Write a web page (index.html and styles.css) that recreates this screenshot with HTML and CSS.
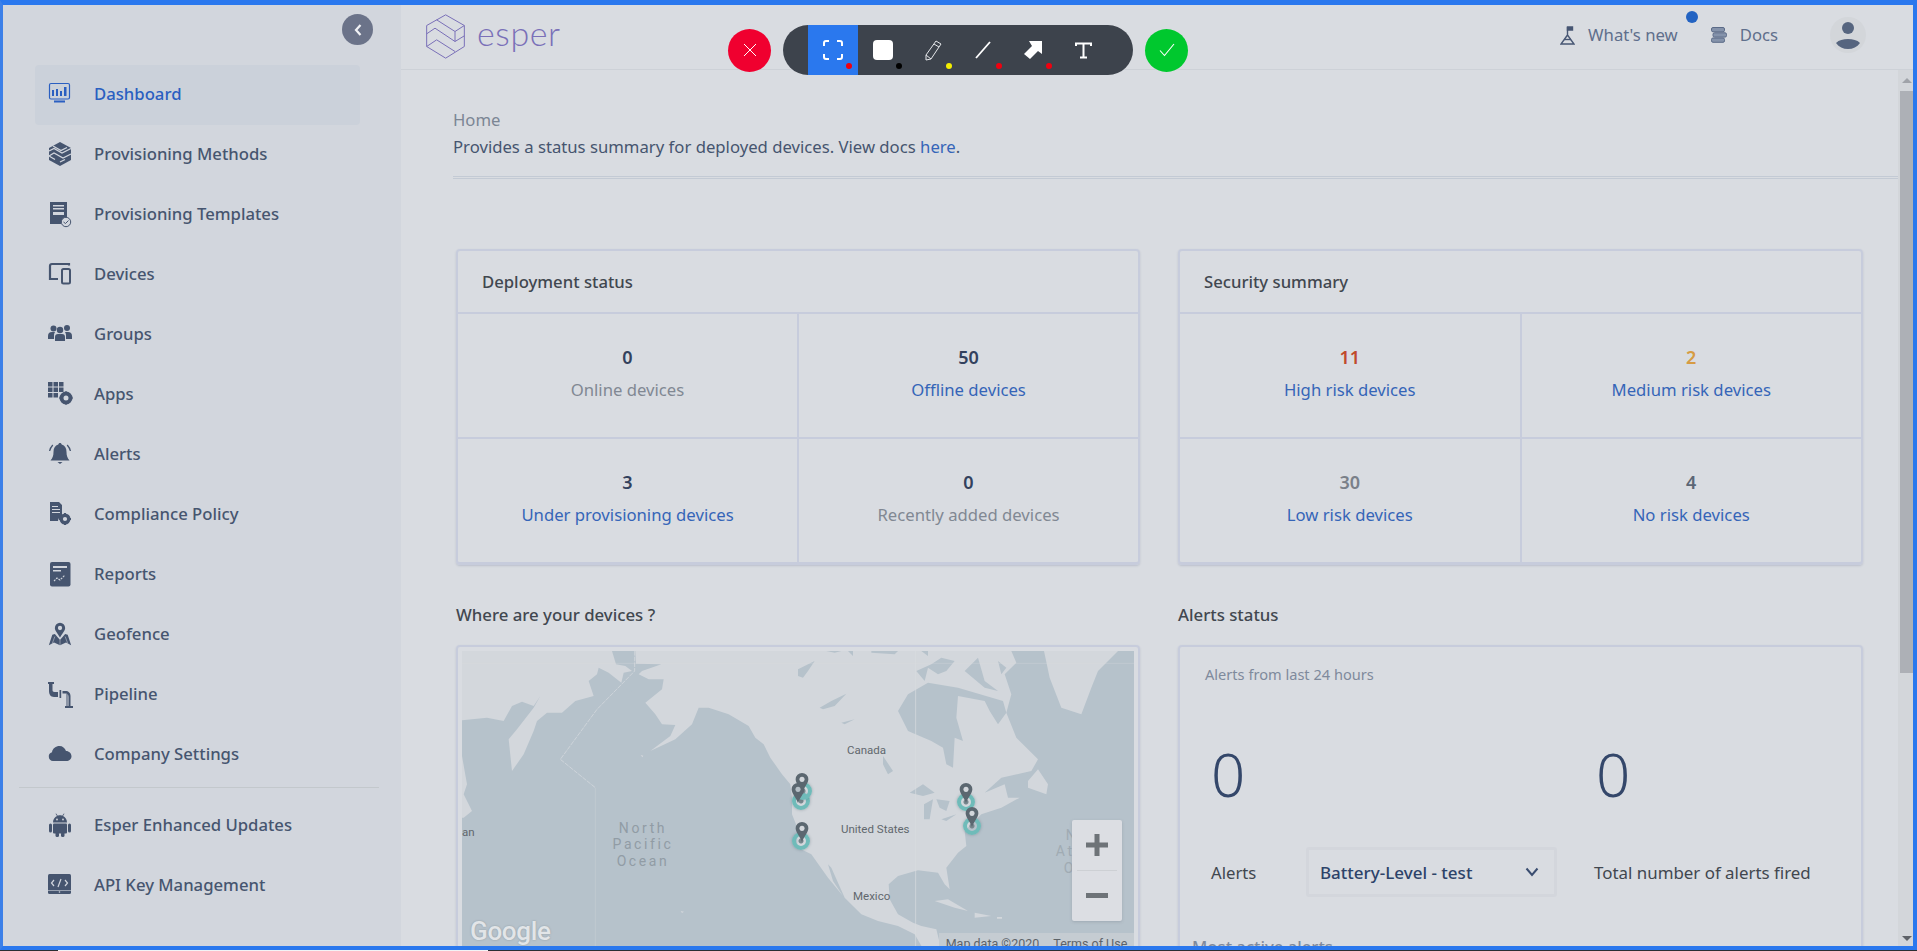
FILE: index.html
```html
<!DOCTYPE html>
<html lang="en">
<head>
    <meta charset="UTF-8">
    <meta name="viewport" content="width=device-width, initial-scale=1.0">
    <title>Esper Dashboard</title>
    <link rel="stylesheet" href="styles.css">
</head>
<body>
    <div class="frame">
        <aside class="sidebar">
            <div class="sidebar-top">
                <button class="collapse-btn">
                    <svg width="10" height="14" viewBox="0 0 10 14"><path d="M7.500 2 L3 7 L7.500 12" fill="none" stroke="#f1f2f5" stroke-width="2.200"/></svg>
                </button>
            </div>
            <ul class="nav-list">
                <li class="nav-item active">
                    <svg class="nav-icon" viewBox="0 0 24 24"><rect x="1.500" y="1.500" width="20" height="15.500" rx="1.500" fill="none" stroke="currentColor" stroke-width="1.200"/><path d="M4 8h2v6H4zM8 7h2v7H8zM12 9h2v5h-2zM16 5h2.500v9H16z" fill="currentColor"/><rect x="6" y="18.500" width="11" height="2" fill="currentColor"/></svg>
                    <span>Dashboard</span>
                </li>
                <li class="nav-item">
                    <svg class="nav-icon" viewBox="0 0 24 24"><path d="M12 0l11 6v12L12 24 1 18V6z" fill="currentColor"/><path d="M5 4l8 4.500 6-3M1 9l5-2.500 8 4.500 9-4.500M1 14l5-3 9 5 8-4M1 14l6 3.500M12 20l5-2.500" fill="none" stroke="#d2d6dd" stroke-width="1.300"/></svg>
                    <span>Provisioning Methods</span>
                </li>
                <li class="nav-item">
                    <svg class="nav-icon" viewBox="0 0 24 24"><path d="M2 0h17v16a6 6 0 0 0-6 6H2z" fill="currentColor"/><path d="M5 3h11v1.500H5zM5 6h11v1.500H5zM5 10h11v3H5z" fill="#d2d6dd"/><circle cx="18" cy="20" r="4.700" fill="#d2d6dd" stroke="currentColor" stroke-width="1"/><path d="M15.500 20l2 1.500 3-3" fill="none" stroke="currentColor" stroke-width="1"/></svg>
                    <span>Provisioning Templates</span>
                </li>
                <li class="nav-item">
                    <svg class="nav-icon" viewBox="0 0 24 24"><path d="M21 3.500V2H4a2 2 0 0 0-2 2v13h8" fill="none" stroke="currentColor" stroke-width="2.200"/><rect x="14" y="7" width="8" height="14.500" rx="1.500" fill="none" stroke="currentColor" stroke-width="2"/></svg>
                    <span>Devices</span>
                </li>
                <li class="nav-item">
                    <svg class="nav-icon" viewBox="0 0 24 24"><circle cx="5.500" cy="6.500" r="3"/><circle cx="19" cy="6" r="3"/><circle cx="12" cy="8" r="3.200"/><path d="M0 17v-3a4 4 0 0 1 4-4h3a6 6 0 0 0-1 3v4zM24 17v-3a4 4 0 0 0-4-4h-3a6 6 0 0 1 1 3v4zM7 19v-4a3 3 0 0 1 3-3h4a3 3 0 0 1 3 3v4z" fill="currentColor"/></svg>
                    <span>Groups</span>
                </li>
                <li class="nav-item">
                    <svg class="nav-icon" viewBox="0 0 24 24"><path d="M0 0h4.500v4.500H0zM5.500 0H10v4.500H5.500zM11 0h4.500v4.500H11zM0 5.500h4.500V10H0zM5.500 5.500H10V10H5.500zM11 5.500h4.500V10H11zM0 11h4.500v4.500H0zM5.500 11H10v4.500H5.500z" fill="currentColor"/><circle cx="18" cy="16" r="4.500" fill="none" stroke="currentColor" stroke-width="4"/><path d="M17 9.500h2v2h-2zM17 20.500h2v2h-2zM11.500 15h2v2h-2zM22.500 15h2v2h-2z" fill="currentColor"/></svg>
                    <span>Apps</span>
                </li>
                <li class="nav-item">
                    <svg class="nav-icon" viewBox="0 0 24 24"><path d="M12 1c1 0 1.500.7 1.700 1.500C17 3.500 18.500 6 18.500 10c0 4 1 6 3 8.500H2.500c2-2.500 3-4.500 3-8.500 0-4 1.500-6.500 4.800-7.500C10.500 1.700 11 1 12 1z" fill="currentColor"/><path d="M9.500 20h5L12 22z" fill="currentColor"/><path d="M4.800 3C3 5 2 6.500 1.600 9M19.200 3C21 5 22 6.500 22.400 9" fill="none" stroke="currentColor" stroke-width="1.300"/></svg>
                    <span>Alerts</span>
                </li>
                <li class="nav-item">
                    <svg class="nav-icon" viewBox="0 0 24 24"><path d="M2 0h9l3 3v13h-3a7 7 0 0 0-1 3H2z" fill="currentColor"/><path d="M4 4h6v1H4zM4 7h8v1H4zM4 10h8v1H4z" fill="#d2d6dd"/><circle cx="17" cy="17" r="3.800" fill="none" stroke="currentColor" stroke-width="3.400"/><path d="M16 11h2v2h-2zM16 21h2v2h-2zM11 16h2v2h-2zM21 16h2v2h-2z" fill="currentColor"/></svg>
                    <span>Compliance Policy</span>
                </li>
                <li class="nav-item">
                    <svg class="nav-icon" viewBox="0 0 24 24"><rect x="2" y="0" width="20.500" height="24.500" rx="2" fill="currentColor"/><path d="M5 4h14v2H5zM5 8h8v1.500H5z" fill="#d2d6dd"/><path d="M6 19l3-3 3 2 5-5" fill="none" stroke="#d2d6dd" stroke-width="1.100" stroke-dasharray="2 1"/></svg>
                    <span>Reports</span>
                </li>
                <li class="nav-item">
                    <svg class="nav-icon" viewBox="0 0 28 28"><path d="M14 1a6 6 0 0 1 6 6c0 3-3 6-6 11-3-5-6-8-6-11a6 6 0 0 1 6-6zm0 3.500a2.500 2.500 0 1 0 0 5 2.500 2.500 0 0 0 0-5z" fill="currentColor" fill-rule="evenodd"/><path d="M8 14l6 7 6-7 3 1 4 12-6-3-7 3-7-3-6 3 4-12z" fill="currentColor"/><path d="M14 21v6M8 17l-3 8M20 17l3 8" stroke="#d2d6dd" stroke-width=".6"/></svg>
                    <span>Geofence</span>
                </li>
                <li class="nav-item">
                    <svg class="nav-icon" viewBox="0 0 24 24"><path d="M0 0h6v2H4.500v6c0 1 .5 2 2 2H10v5H6C2.500 15 1 12 1 9V2H0z" fill="currentColor"/><path d="M11.500 8h1.700v8h-1.700zM14.500 9h3c3 0 5 2 5 5v10h-2V15c0-2-1-3.500-3-3.500h-3z" fill="currentColor"/><path d="M19 12v12" stroke="currentColor" stroke-width="1"/><path d="M17 24h8v2h-8z" fill="currentColor"/></svg>
                    <span>Pipeline</span>
                </li>
                <li class="nav-item">
                    <svg class="nav-icon" viewBox="0 0 24 24"><path d="M5 19a4.500 4.500 0 0 1-1-8.800C4.500 6.500 8 4 11.500 4c3 0 5.500 2 6.500 5 3 0 5.500 2.300 5.500 5.200S21 19 18.500 19z" fill="currentColor"/></svg>
                    <span>Company Settings</span>
                </li>
            </ul>
            <div class="nav-divider"></div>
            <ul class="nav-list">
                <li class="nav-item">
                    <svg class="nav-icon" viewBox="0 0 24 24"><path d="M5 9.500C5 6.500 6.800 4 9 3L7.500.8l.6-.4L9.800 2.700c1.400-.5 3-.5 4.400 0L15.900.4l.6.4L15 3c2.200 1 4 3.500 4 6.500z" fill="currentColor"/><rect x="5" y="10.500" width="14" height="10" rx="1" fill="currentColor"/><rect x="1" y="10.500" width="3" height="9" rx="1.500" fill="currentColor"/><rect x="20" y="10.500" width="3" height="9" rx="1.500" fill="currentColor"/><rect x="7.500" y="19" width="3.500" height="5" rx="1.500" fill="currentColor"/><rect x="13" y="19" width="3.500" height="5" rx="1.500" fill="currentColor"/><circle cx="9" cy="6.500" r=".9" fill="#d2d6dd"/><circle cx="15" cy="6.500" r=".9" fill="#d2d6dd"/></svg>
                    <span>Esper Enhanced Updates</span>
                </li>
                <li class="nav-item">
                    <svg class="nav-icon" viewBox="0 0 24 24"><rect x="0" y="1" width="23" height="20" rx="1.500" fill="currentColor"/><path d="M6 7L3.500 10 6 13M17 7l2.500 3L17 13M13 6l-3 8" fill="none" stroke="#d2d6dd" stroke-width="1.200"/><path d="M0 17.500h23" stroke="#d2d6dd" stroke-width=".6"/><circle cx="11.500" cy="19" r=".8" fill="#d2d6dd"/></svg>
                    <span>API Key Management</span>
                </li>
            </ul>
        </aside>

        <div class="main">
            <header class="topbar">
                <div class="logo">
                    <svg width="41" height="47" viewBox="15 10 123 140" fill="none" stroke="#7a70b8" stroke-width="3"><path d="M77 15l56 32v63l-56 35-57-35V47z"/><path d="M50 30l55 35 28-18M105 65v30M20 72l25-17 60 40 28-17M20 110l30-20 55 35"/></svg>
                    <span class="logo-text">esper</span>
                </div>
                <div class="topbar-links">
                    <a class="top-link whats-new">
                        <svg width="15" height="19" viewBox="0 0 15 19" fill="none" stroke="#475673" stroke-width="1.400"><path d="M7.500 9L1 18h13L7.500 9zM7.500 9V1"/><path d="M7.500 1h5v3h-5z" fill="#475673"/><path d="M4 13.500h7"/></svg>
                        <span>What's new</span>
                        <i class="new-dot"></i>
                    </a>
                    <a class="top-link docs">
                        <svg width="16" height="16" viewBox="0 0 16 16"><rect x=".5" y=".5" width="13" height="4.300" rx="1.500" fill="#8593ab" stroke="#5a6a87"/><rect x="2" y="5.800" width="13.500" height="4.300" rx="1.500" fill="#8593ab" stroke="#5a6a87"/><rect x=".5" y="11" width="13" height="4.300" rx="1.500" fill="#8593ab" stroke="#5a6a87"/></svg>
                        <span>Docs</span>
                    </a>
                    <div class="avatar">
                        <svg width="36" height="36" viewBox="0 0 36 36"><circle cx="18" cy="11" r="6" fill="#56657f"/><path d="M6 26c3-3 7-4 12-4s9 1 12 4c-3 4-7 6-12 6s-9-2-12-6z" fill="#56657f"/></svg>
                    </div>
                </div>
            </header>

            <div class="main-body">
                <div class="content">
                    <div class="page-head">
                        <p class="crumb">Home</p>
                        <p class="page-desc">Provides a status summary for deployed devices. View docs <a href="#">here</a>.</p>
                    </div>
                    <div class="grid-two">
                        <section class="card">
                            <h3 class="card-title">Deployment status</h3>
                            <div class="stats">
                                <div class="stat"><b>0</b><span class="muted">Online devices</span></div>
                                <div class="stat"><b>50</b><span class="link">Offline devices</span></div>
                                <div class="stat"><b>3</b><span class="link">Under provisioning devices</span></div>
                                <div class="stat"><b>0</b><span class="muted">Recently added devices</span></div>
                            </div>
                        </section>
                        <section class="card">
                            <h3 class="card-title">Security summary</h3>
                            <div class="stats">
                                <div class="stat"><b class="risk-high">11</b><span class="link">High risk devices</span></div>
                                <div class="stat"><b class="risk-med">2</b><span class="link">Medium risk devices</span></div>
                                <div class="stat"><b class="risk-low">30</b><span class="link">Low risk devices</span></div>
                                <div class="stat"><b class="risk-none">4</b><span class="link">No risk devices</span></div>
                            </div>
                        </section>
                    </div>

                    <div class="grid-two lower">
                        <section>
                            <h3 class="section-title">Where are your devices ?</h3>
                            <div class="card map-card">
                                <div class="map">
                                    <svg class="map-bg" viewBox="0 0 2016 936">
                                        <rect width="2016" height="936" fill="#b6c2cb"/>
                                        <!-- west half -->
                                        <g fill="#d3d7dc">
                                            <path d="M0 0H450L462 40 490 45 510 60 485 65 478 95 440 65 410 50 405 70 380 90 395 135 340 150 300 185 255 185 225 210 215 240 185 310 150 360 140 265 165 235 215 170 235 135 215 165 180 152 150 165 125 210 75 200 0 208z"/>
                                            <path d="M0 315L15 400 5 430 30 480 5 500H0z"/>
                                            <path d="M520 0L522 38 598 40 540 60 530 70 560 85 605 85 600 115 550 155 580 190 600 220 640 222 625 255 565 300 640 265 690 220 710 170 740 170 800 190 860 225 880 260 905 280 925 320 960 370 985 400 990 440 990 490 1010 540 1010 595 1012 0z"/>
                                            <path d="M536 312l8 2-3 5zM656 780l10 2-6 4z"/>
                                        </g>
                                        <path fill="#b6c2cb" d="M490 110l18 8 12 6-16-2z"/>
                                        <path fill="none" stroke="#d9dde1" stroke-width="2" stroke-dasharray="14 3" d="M518 0V60L405 175 295 325 400 410"/>
                                        <path fill="none" stroke="#c6cdd3" stroke-width="2" d="M400 410V936"/>
                                        <!-- east half -->
                                        <g transform="translate(1008)">
                                            <path fill="#d3d7dc" d="M-2 0H640L655 35 620 70 640 130 625 185 655 260 720 325 700 360 610 380 560 425 620 400 630 440 665 440 610 470 550 490 500 540 505 585 480 605 445 650 455 715 440 700 420 665 360 658 300 675 272 700 275 745 300 790 345 815 370 825 415 835 440 936H400L350 850 300 825 240 810 190 790 140 740 100 650 90 640 105 690 135 735 90 680 40 610 0 590H-2z"/>
                                            <path fill="#d3d7dc" d="M738 0H960L900 60 880 110 850 190 790 170 755 80zM690 390L720 355 750 400 745 430 690 410zM410 750L450 745 510 780 470 770zM530 785L580 795 530 800zM597 798H612V803H597z"/>
                                            <!-- hudson bay, lakes, arctic water -->
                                            <path fill="#b6c2cb" d="M390 95L480 110 615 150 625 185 600 220 575 180 560 150 480 135 475 200 495 270 470 260 465 350 445 340 435 290 400 270 330 240 300 180 330 130z"/>
                                            <path fill="#b6c2cb" d="M0 55L50 30 30 60 15 80 0 75zM65 170L100 150 145 128 110 165 75 175zM130 215L170 205 140 220zM255 315L285 360 270 370 255 340zM335 425L375 400 410 425 375 435zM378 460L405 445 395 505 378 505zM415 445L455 450 445 480 425 470zM430 505L475 490 445 510zM85 0H130L110 5zM150 0H165V15zM220 0H300L290 10 220 5zM370 0H390V15zM355 60L400 40 430 20 470 30 445 60 420 70 390 50 380 90zM500 60L540 20 560 90 600 120 560 110zM600 30L625 50 610 70z"/>
                                            <path fill="none" stroke="#d9dde1" stroke-width="2" d="M353 0V936"/>
                                        </g>
                                        <path fill="none" stroke="#d9dde1" stroke-width="1.500" opacity=".6" d="M0 37H2016"/>
                                    </svg>
                                    <span class="map-label" style="left:385px;top:92px">Canada</span>
                                    <span class="map-label" style="left:379px;top:171px">United States</span>
                                    <span class="map-label" style="left:391px;top:238px">Mexico</span>
                                    <span class="map-label" style="left:0;top:174px">an</span>
                                    <span class="map-ocean" style="left:139px;top:169px">North<br>Pacific<br>Ocean</span>
                                    <span class="map-ocean atlantic" style="left:586px;top:176px">North<br>Atlantic<br>Ocean</span>
                                    <span class="map-ring" style="left:330px;top:141px"></span>
                                    <span class="map-ring" style="left:332px;top:131px"></span>
                                    <span class="map-ring" style="left:330px;top:181px"></span>
                                    <span class="map-ring" style="left:495px;top:142px"></span>
                                    <span class="map-ring" style="left:501px;top:166px"></span>
                                    <svg class="map-pin" style="left:333px;top:122px" viewBox="0 0 14 22"><path d="M7 0a7 7 0 0 1 7 7c0 4-4 8-7 15C4 15 0 11 0 7a7 7 0 0 1 7-7z" fill="#5b6770"/><circle cx="7" cy="7" r="2.800" fill="#d3d7dc"/></svg>
                                    <svg class="map-pin" style="left:329px;top:132px" viewBox="0 0 14 22"><path d="M7 0a7 7 0 0 1 7 7c0 4-4 8-7 15C4 15 0 11 0 7a7 7 0 0 1 7-7z" fill="#5b6770"/><circle cx="7" cy="7" r="2.800" fill="#b5bfc6"/></svg>
                                    <svg class="map-pin" style="left:333px;top:171px" viewBox="0 0 14 22"><path d="M7 0a7 7 0 0 1 7 7c0 4-4 8-7 15C4 15 0 11 0 7a7 7 0 0 1 7-7z" fill="#5b6770"/><circle cx="7" cy="7" r="2.800" fill="#d3d7dc"/></svg>
                                    <svg class="map-pin" style="left:497px;top:132px" viewBox="0 0 14 22"><path d="M7 0a7 7 0 0 1 7 7c0 4-4 8-7 15C4 15 0 11 0 7a7 7 0 0 1 7-7z" fill="#5b6770"/><circle cx="7" cy="7" r="2.800" fill="#d3d7dc"/></svg>
                                    <svg class="map-pin" style="left:503px;top:156px" viewBox="0 0 14 22"><path d="M7 0a7 7 0 0 1 7 7c0 4-4 8-7 15C4 15 0 11 0 7a7 7 0 0 1 7-7z" fill="#5b6770"/><circle cx="7" cy="7" r="2.800" fill="#d3d7dc"/></svg>
                                    <div class="map-zoom">
                                        <span class="zoom-btn">
                                            <svg width="22" height="22" viewBox="0 0 22 22"><path d="M8.500 0h5v8.500H22v5h-8.500V22h-5v-8.500H0v-5h8.500z" fill="#6e7378"/></svg>
                                        </span>
                                        <span class="zoom-btn">
                                            <svg width="22" height="6" viewBox="0 0 22 6"><rect width="22" height="5" fill="#6e7378"/></svg>
                                        </span>
                                    </div>
                                    <span class="map-google">Google</span>
                                    <div class="map-attr"><span>Map data ©2020</span><span>Terms of Use</span></div>
                                </div>
                            </div>
                        </section>
                        <section>
                            <h3 class="section-title">Alerts status</h3>
                            <div class="card alerts-card">
                                <p class="alerts-sub">Alerts from last 24 hours</p>
                                <div class="alerts-nums">
                                    <div class="big-zero">0</div>
                                    <div class="big-zero">0</div>
                                </div>
                                <div class="alerts-row">
                                    <span class="alerts-label">Alerts</span>
                                    <div class="select-box">
                                        <span>Battery-Level - test</span>
                                        <svg width="14" height="10" viewBox="0 0 14 10"><path d="M1.500 1.500L7 8l5.500-6.500" fill="none" stroke="#3a4d70" stroke-width="2"/></svg>
                                    </div>
                                    <span class="alerts-total">Total number of alerts fired</span>
                                </div>
                                <p class="most-active">Most active alerts</p>
                            </div>
                        </section>
                    </div>
                </div>
                <div class="scrollbar">
                    <i class="arrow-up"></i>
                    <div class="thumb"></div>
                    <i class="arrow-down"></i>
                </div>
            </div>
        </div>

        <!-- toolbar of the screenshot tool, lies over the page -->
        <div class="shot-tools">
            <button class="round-btn cancel">
                <svg width="14" height="14" viewBox="0 0 14 14"><path d="M1 1l12 12M13 1L1 13" stroke="#fff" stroke-width="1"/></svg>
            </button>
            <div class="tool-pill">
                <div class="tool selected">
                    <svg width="20" height="20" viewBox="0 0 20 20" fill="none" stroke="#fff" stroke-width="2"><path d="M1 6V3a2 2 0 0 1 2-2h3M14 1h3a2 2 0 0 1 2 2v3M19 14v3a2 2 0 0 1-2 2h-3M6 19H3a2 2 0 0 1-2-2v-3"/></svg>
                    <i class="dot red"></i>
                </div>
                <div class="tool">
                    <span class="white-square"></span>
                    <i class="dot black"></i>
                </div>
                <div class="tool">
                    <svg width="20" height="21" viewBox="0 0 20 21" fill="none" stroke="#e5e7ea" stroke-width="1"><path d="M13 1l5 3L8 19l-5 1 0-5zM11 4l5 3M3 15l5 4"/></svg>
                    <i class="dot yellow"></i>
                </div>
                <div class="tool">
                    <svg width="18" height="20" viewBox="0 0 18 20"><path d="M16 2L2 18" stroke="#fff" stroke-width="1.800"/></svg>
                    <i class="dot red"></i>
                </div>
                <div class="tool">
                    <svg width="18" height="18" viewBox="0 0 18 18"><path d="M5 0h13v13l-4-3-8 8-6-5 8-8z" fill="#fff"/></svg>
                    <i class="dot red"></i>
                </div>
                <div class="tool">
                    <svg width="17" height="17" viewBox="0 0 17 17" fill="none" stroke="#fff" stroke-width="2"><path d="M1 4V1.500h15V4M8.500 1.500V15.500M5 15.500h7"/></svg>
                </div>
            </div>
            <button class="round-btn confirm">
                <svg width="16" height="14" viewBox="0 0 16 14"><path d="M1 7.500l4.500 5L15 1" fill="none" stroke="#fff" stroke-width="1.100"/></svg>
            </button>
        </div>
    </div>
    <div class="taskbar-edge"></div>
</body>
</html>
```

FILE: styles.css
```css
* {
    margin: 0;
    padding: 0;
    box-sizing: border-box;
}

html, body {
    height: 951px;
    overflow: hidden;
}

body {
    font-family: "Noto Sans", "Liberation Sans", sans-serif;
    font-size: 16.7px;
    background-color: #2a2e33;
    color: #46556f;
    display: flex;
    flex-direction: column;
}

.frame {
    position: relative;
    height: 950px;
    display: flex;
    border-top: 5px solid #2a78ee;
    border-bottom: 4px solid #2a78ee;
    border-left: 3px solid #3c80e8;
    border-right: 4px solid #2a78ee;
    overflow: hidden;
}

.taskbar-edge {
    height: 1px;
    background: linear-gradient(to right, #2a2e33 58px, #f2f3f5 58px, #f2f3f5 488px, #2a2e33 488px);
}

/* Sidebar */
.sidebar {
    width: 398px;
    flex-shrink: 0;
    background-color: #d2d6dd;
}

.sidebar-top {
    height: 60px;
    padding: 9px 28px 0 0;
    display: flex;
    justify-content: flex-end;
}

.collapse-btn {
    width: 31px;
    height: 31px;
    border: none;
    border-radius: 50%;
    background-color: #6b7389;
    display: flex;
    align-items: center;
    justify-content: center;
}

.nav-list {
    list-style: none;
    padding-left: 32px;
    padding-right: 41px;
}

.nav-item {
    height: 60px;
    display: flex;
    align-items: center;
    padding-left: 13px;
    padding-bottom: 3px;
    font-size: 16.7px;
    font-weight: 500;
    color: #46556f;
    border-radius: 4px;
}

.nav-item.active {
    background-color: #cbd1da;
    color: #2a5fc1;
}

.nav-icon {
    width: 24px;
    height: 24px;
    margin-right: 22px;
    fill: currentColor;
    flex-shrink: 0;
    overflow: visible;
}

.nav-divider {
    height: 1px;
    background-color: #c3c8cc;
    margin: 2px 22px 8px 16px;
}

/* Top bar */
.main {
    flex: 1;
    min-width: 0;
    display: flex;
    flex-direction: column;
    background-color: #d9dce1;
}

.topbar {
    height: 65px;
    flex-shrink: 0;
    border-bottom: 1px solid #cdd1d7;
    padding-left: 24px;
    display: flex;
    justify-content: space-between;
}

.logo {
    display: flex;
    align-items: flex-start;
    padding-top: 8px;
}

.logo-text {
    font-family: "Lato", sans-serif;
    font-weight: 300;
    font-size: 34px;
    line-height: 34px;
    letter-spacing: 0.6px;
    color: #7a70b8;
    margin-left: 11px;
    margin-top: 3px;
}

.topbar-links {
    display: flex;
    align-items: flex-start;
    padding-top: 12px;
}

.top-link {
    position: relative;
    display: flex;
    align-items: center;
    height: 36px;
    color: #5f6f8c;
}

.top-link span {
    margin-bottom: 2px;
}

.whats-new svg {
    margin-right: 13px;
}

.whats-new {
    margin-right: 33px;
}

.docs svg {
    margin-right: 13px;
}

.docs {
    margin-right: 52px;
}

.new-dot {
    position: absolute;
    right: -20px;
    top: -6px;
    width: 12px;
    height: 12px;
    border-radius: 50%;
    background-color: #2363c2;
}

.avatar {
    width: 36px;
    height: 36px;
    margin-right: 47px;
    border-radius: 50%;
    background-color: #d3d6da;
}

/* Page */
.main-body {
    flex: 1;
    min-height: 0;
    display: flex;
}

.content {
    flex: 1;
    min-width: 0;
    padding: 36px 0 0 52px;
    overflow: hidden;
}

.page-head {
    height: 73px;
    border-bottom: 3px double #c3cad4;
    line-height: 27px;
}

.crumb {
    color: #7c8694;
}

.page-desc a {
    color: #3565b8;
    text-decoration: none;
}

.grid-two {
    display: grid;
    grid-template-columns: 684px 685px;
    gap: 38px;
    padding-left: 3px;
    margin-top: 70px;
}

.grid-two.lower {
    margin-top: 37px;
}

.card {
    border: 2px solid #c7ccdc;
    border-radius: 4px;
    border-bottom-width: 3px;
    box-shadow: 0 1px 2px rgba(120, 130, 160, 0.3);
}

.card-title {
    height: 61px;
    padding-left: 24px;
    display: flex;
    align-items: center;
    font-size: 16.7px;
    font-weight: 500;
    color: #41474f;
}

.stats {
    display: grid;
    grid-template-columns: calc(50% - 1px) 1fr;
    grid-template-rows: 125px 125px;
}

.stat {
    border-top: 2px solid #c7ccdc;
    padding-top: 30px;
    display: flex;
    flex-direction: column;
    align-items: center;
    gap: 5px;
    line-height: 27px;
}

.stat:nth-child(even) {
    border-left: 2px solid #c7ccdc;
}

.stat b {
    font-size: 18px;
    font-weight: 600;
    color: #33415d;
}

.muted {
    color: #818893;
}

.link {
    color: #3565b8;
}

.stat b.risk-high {
    color: #c04a2c;
}

.stat b.risk-med {
    color: #d69b42;
}

.stat b.risk-low {
    color: #7a8089;
}

.stat b.risk-none {
    color: #5c6675;
}

.section-title {
    height: 27px;
    line-height: 25px;
    margin-bottom: 16px;
    font-size: 16.8px;
    font-weight: 500;
    color: #41474f;
}

.map-card {
    height: 320px;
    padding: 4px;
}

.map {
    position: relative;
    height: 312px;
    overflow: hidden;
    font-family: "Roboto", sans-serif;
}

.map-bg {
    display: block;
    width: 672px;
    height: 312px;
}

.map-label {
    position: absolute;
    font-size: 11.500px;
    color: #61676d;
    white-space: nowrap;
}

.map-ocean {
    position: absolute;
    width: 84px;
    font-size: 14px;
    line-height: 16.300px;
    letter-spacing: 2.600px;
    text-align: center;
    color: #919ca5;
}

.map-ocean.atlantic {
    color: #a0abb3;
}

.map-ring {
    position: absolute;
    width: 18px;
    height: 18px;
    border: 4px solid #6fbbb9;
    border-radius: 50%;
    background: radial-gradient(#76868c 2px, transparent 3px);
    filter: blur(0.5px);
    box-shadow: 0 0 3px rgba(70, 90, 100, 0.4);
}

.map-pin {
    position: absolute;
    width: 14px;
    height: 20px;
}

.map-zoom {
    position: absolute;
    left: 610px;
    top: 169px;
    width: 50px;
    height: 101px;
    background-color: #dcdee3;
    border-radius: 2px;
    box-shadow: 0 1px 3px rgba(90, 100, 110, 0.25);
    display: flex;
    flex-direction: column;
}

.zoom-btn {
    flex: 1;
    display: flex;
    align-items: center;
    justify-content: center;
}

.zoom-btn:first-child {
    border-bottom: 1px solid #cdd0d4;
    margin: 0 5px;
}

.map-google {
    position: absolute;
    left: 8px;
    top: 265px;
    font-size: 26px;
    font-weight: 500;
    line-height: 30px;
    letter-spacing: -0.3px;
    color: #e2e5e8;
    text-shadow: 0 0 2px #8c979f;
}

.map-attr {
    position: absolute;
    left: 477px;
    top: 282px;
    width: 195px;
    height: 18px;
    padding-top: 2px;
    display: flex;
    gap: 14px;
    justify-content: center;
    background-color: #c5ccd2;
    font-size: 12.500px;
    color: #5d6369;
    line-height: 18px;
}

.alerts-card {
    height: 320px;
    padding-top: 16px;
}

.alerts-sub {
    padding-left: 25px;
    font-size: 14.600px;
    line-height: 22px;
    color: #7f8a9c;
}

.alerts-nums {
    display: flex;
    padding-left: 31px;
    margin-top: 54px;
}

.big-zero {
    font-size: 60px;
    font-weight: 300;
    line-height: 70px;
    color: #34476a;
    width: 385px;
    flex-shrink: 0;
}

.alerts-row {
    display: flex;
    align-items: center;
    padding-left: 31px;
    margin-top: 38px;
}

.alerts-label {
    width: 95px;
    color: #41474f;
}

.select-box {
    width: 251px;
    height: 50px;
    border: 3px solid #d3d6dc;
    border-radius: 3px;
    padding: 0 15px 0 11px;
    display: flex;
    align-items: center;
    justify-content: space-between;
    font-size: 17px;
    font-weight: 500;
    color: #2d4369;
}

.alerts-total {
    margin-left: 37px;
    font-size: 16.900px;
    color: #41474f;
}

.most-active {
    margin: 38px 0 0 12px;
    font-weight: 500;
    color: #7f8a9c;
}

/* Scrollbar */
.scrollbar {
    position: relative;
    width: 15px;
    flex-shrink: 0;
    background-color: #d3d6da;
}

.thumb {
    position: absolute;
    top: 21px;
    left: 2px;
    right: 0;
    height: 582px;
    background-color: #adb0b6;
}

.arrow-up, .arrow-down {
    position: absolute;
    left: 4px;
    width: 0;
    height: 0;
    border-left: 5px solid transparent;
    border-right: 5px solid transparent;
}

.arrow-up {
    top: 8px;
    border-bottom: 5px solid #a0a3a9;
}

.arrow-down {
    bottom: 5px;
    border-top: 5px solid #5e6268;
}

/* Screenshot toolbar */
.shot-tools {
    position: absolute;
    left: 725px;
    top: 20px;
    display: flex;
    align-items: center;
    gap: 12px;
}

.round-btn {
    width: 43px;
    height: 43px;
    border: none;
    border-radius: 50%;
    display: flex;
    align-items: center;
    justify-content: center;
}

.round-btn.cancel {
    background-color: #f0002f;
}

.round-btn.confirm {
    background-color: #00c82e;
}

.tool-pill {
    height: 50px;
    width: 350px;
    padding: 0 25px;
    border-radius: 25px;
    background-color: #3d434c;
    display: flex;
}

.tool {
    position: relative;
    width: 50px;
    flex-shrink: 0;
    display: flex;
    align-items: center;
    justify-content: center;
}

.tool.selected {
    background-color: #2a78ee;
}

.white-square {
    width: 20px;
    height: 20px;
    background-color: #fff;
    border-radius: 4px;
}

.dot {
    position: absolute;
    right: 6px;
    bottom: 6px;
    width: 6px;
    height: 6px;
    border-radius: 50%;
}

.dot.red { background-color: #f0000f; }
.dot.black { background-color: #000; }
.dot.yellow { background-color: #f5ee00; }
```
